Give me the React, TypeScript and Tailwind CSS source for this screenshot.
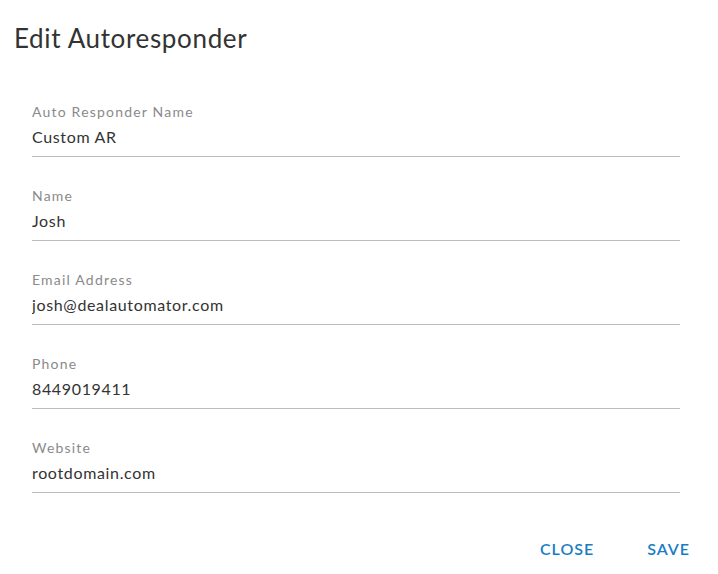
import React from 'react';

interface Field {
    label: string;
    value: string;
}

const fields: Field[] = [
    { label: 'Auto Responder Name', value: 'Custom AR' },
    { label: 'Name', value: 'Josh' },
    { label: 'Email Address', value: 'josh@dealautomator.com' },
    { label: 'Phone', value: '8449019411' },
    { label: 'Website', value: 'rootdomain.com' },
];

const App: React.FC = () => {
    return (
        <div className="w-[718px] h-[574px] bg-white font-['Lato',sans-serif] flex flex-col">
            {/* Title */}
            <h2 className="pl-[14px] pt-[22px] text-[26px] leading-[32px] text-[#333333] font-normal tracking-[0.65px]">
                Edit Autoresponder
            </h2>

            {/* Fields */}
            <div className="pl-[32px] pr-[38px] pt-[19px] flex flex-col">
                {fields.map(f => (
                    <div key={f.label} className="pt-[29px] pb-[7px] border-b border-[#bdbdbd] flex flex-col gap-[3px]">
                        <label className="text-[14px] leading-[20px] text-[#8a8a8a] tracking-[1.2px]">{f.label}</label>
                        <input
                            type="text"
                            defaultValue={f.value}
                            className="text-[16px] leading-[24px] text-[#333333] outline-none bg-transparent p-0 tracking-[0.65px]"
                        />
                    </div>
                ))}
            </div>

            {/* Actions */}
            <div className="flex justify-end pr-[28px] pt-[44px] gap-[53px]">
                <button type="button" className="text-[16px] leading-[24px] font-semibold text-[#1a7dc3] uppercase tracking-[1px]">
                    Close
                </button>
                <button type="button" className="text-[16px] leading-[24px] font-semibold text-[#1a7dc3] uppercase tracking-[1px]">
                    Save
                </button>
            </div>
        </div>
    );
};

export default App;
